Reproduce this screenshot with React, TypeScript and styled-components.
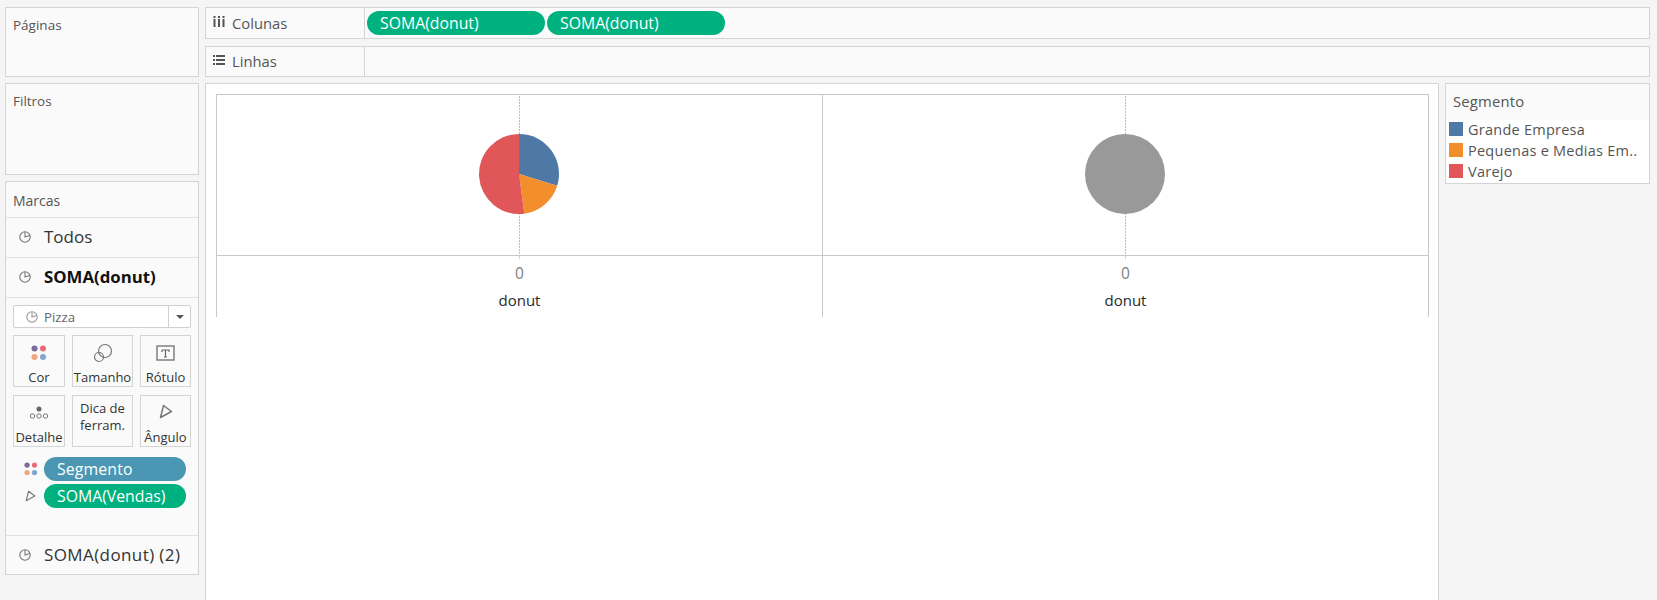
import React from "react";
import styled, { createGlobalStyle } from "styled-components";

const Global = createGlobalStyle`
  html, body { margin: 0; padding: 0; background: #f5f5f5; }
  body { font-family: "Open Sans", "Liberation Sans", sans-serif; overflow: hidden; }
  * { box-sizing: border-box; }
`;

const Page = styled.div`
  width: 1657px; height: 600px; overflow: hidden;
  display: grid; grid-template-columns: 194px 1fr; grid-template-rows: 70px 1fr;
  gap: 6px; padding: 7px 7px 0 5px; background: #f5f5f5;
`;
const Panel = styled.div<{ $h?: number }>`
  background: #fafafa; border: 1px solid #d4d4d4;
  ${(p) => (p.$h ? `height: ${p.$h}px;` : "")}
`;
const PanelTitle = styled.div`
  font-size: 13.5px; color: #555; padding: 8px 7px; line-height: 19px;
`;
const Shelves = styled.div`display: flex; flex-direction: column; gap: 7px;`;
const Shelf = styled(Panel)`flex: 1; display: flex; align-items: stretch;`;
const ShelfLabel = styled.div`
  width: 159px; flex: none; border-right: 1px solid #d4d4d4; display: flex; align-items: center;
  gap: 7px; padding: 0 0 0 7px; font-size: 14.8px; color: #555;
`;
const ShelfIcon = styled.svg`flex: none; margin-top: -3px;`;
const ShelfPills = styled.div`flex: 1; display: flex; align-items: center; gap: 2px; padding-left: 2px;`;
const Pill = styled.div<{ $w: number; $blue?: boolean }>`
  width: ${(p) => p.$w}px; height: 24px; border-radius: 12px; flex: none;
  background: ${(p) => (p.$blue ? "#4b96b3" : "#00b180")};
  color: #fff; font-size: 15.8px; line-height: 24px; padding-left: 13px; white-space: nowrap;
  letter-spacing: ${(p) => (p.$blue ? "0.15px" : "0")};
`;
const LeftCol = styled.div`display: flex; flex-direction: column; gap: 6px;`;
const Main = styled.div`display: flex; gap: 6px; min-height: 0;`;
const View = styled.div`
  width: 1234px; height: 530px; flex: none; background: #fff; padding: 10px 10px 0;
  border: 1px solid #d4d4d4; border-bottom: none;
`;
const Plot = styled.div`
  display: grid; grid-template-columns: 605px 1fr; grid-template-rows: 160px 62px;
  width: 1213px; border: 1px solid #c8c8c8; border-bottom: none;
`;
const Pane = styled.div<{ $second?: boolean }>`
  display: flex; justify-content: center; align-items: flex-start;
  ${(p) => (p.$second ? "border-left: 1px solid #c8c8c8;" : "")}
`;
const AxisPane = styled(Pane)`
  flex-direction: column; align-items: center; justify-content: flex-start;
  border-top: 1px solid #c8c8c8;
`;
const Tick = styled.div`font-size: 15.5px; color: #808080; line-height: 18px; margin-top: 8px;`;
const AxisTitle = styled.div`font-size: 15px; font-weight: 400; color: #2a2a2a; line-height: 18px; margin-top: 9px;`;
const Legend = styled.div`
  width: 205px; height: 101px; flex: none; background: #fff; border: 1px solid #d4d4d4;
  display: flex; flex-direction: column;
`;
const LegendTitle = styled.div`
  height: 36px; background: #fafafa; font-size: 14.8px; letter-spacing: 0.2px; color: #555; padding: 6px 7px 0; line-height: 22px; flex: none;
`;
const LegendRows = styled.div`display: flex; flex-direction: column; gap: 7px; padding: 2px 3px 0;`;
const LegendRow = styled.div`
  display: flex; align-items: center; gap: 5px; height: 14px; font-size: 14.5px; color: #555; white-space: nowrap; letter-spacing: 0.25px;
`;
const Swatch = styled.div<{ $c: string }>`width: 14px; height: 14px; background: ${(p) => p.$c}; flex: none;`;
const MarkRow = styled.div<{ $bold?: boolean; $wide?: boolean }>`
  height: 40px; display: flex; align-items: center; padding: 0 0 2px 13px; gap: 13px;
  border-top: 1px solid #e0e0e0; font-size: ${(p) => (p.$bold ? 16.8 : 17)}px; color: ${(p) => (p.$bold ? "#111" : "#333")};
  font-weight: ${(p) => (p.$bold ? 700 : 400)};
  letter-spacing: ${(p) => (p.$wide ? "0.4px" : "0")};
`;
const MarkTitle = styled(PanelTitle)`height: 35px; padding-top: 9px; font-size: 14px;`;
const Editor = styled.div`padding: 7px 7px 0; height: 238px; border-top: 1px solid #e0e0e0;`;
const Dropdown = styled.div`
  height: 23px; border: 1px solid #d0d0d0; border-radius: 2px; background: #fff;
  display: flex; align-items: center; font-size: 13.2px; color: #666; padding-left: 12px; gap: 6px;
`;
const DropLabel = styled.span`flex: 1;`;
const Caret = styled.div`
  width: 22px; height: 21px; border-left: 1px solid #d0d0d0; display: flex; align-items: center; justify-content: center;
  &::after { content: ""; border: 4px solid transparent; border-top: 4px solid #555; border-bottom: none; }
`;
const Cards = styled.div`
  display: grid; grid-template-columns: 52px 61px 51px; grid-auto-rows: 52px; gap: 8px 7px; margin-top: 7px;
`;
const Card = styled.div`
  border: 1px solid #d4d4d4; background: #fafafa; display: flex; flex-direction: column; align-items: center;
  font-size: 13px; color: #333; line-height: 17px; white-space: nowrap; justify-content: flex-end;
`;
const CardIcon = styled.div`flex: 1; display: flex; align-items: center; justify-content: center;`;
const AngleCardIcon = styled(CardIcon)`padding-bottom: 3px;`;
const TextCard = styled(Card)`justify-content: center; padding-bottom: 8px;`;
const PillRow = styled.div`display: flex; align-items: center; height: 24px; margin-top: 3px;`;
const PillFirstRow = styled(PillRow)`margin-top: 0;`;
const PillIcon = styled.div`width: 31px; flex: none; display: flex; justify-content: center; padding-left: 4px;`;
const Pills = styled.div`margin-top: 10px;`;

const PieIcon = ({ c = "#777" }: { c?: string }) => (
  <svg width="12" height="12" viewBox="0 0 12 12" fill="none" stroke={c} strokeWidth="1.1">
    <circle cx="6" cy="6" r="5.2" />
    <path d="M6 1V6L10.6 4.4" />
  </svg>
);
const ColorIcon = ({ s = 16 }: { s?: number }) => (
  <svg width={s} height={s} viewBox="0 0 16 16">
    <circle cx="3.5" cy="3.5" r="3" fill="#7b6a9c" />
    <circle cx="12" cy="3.5" r="3" fill="#ea6b7c" />
    <circle cx="3.5" cy="12" r="3" fill="#f0a77e" />
    <circle cx="12" cy="12" r="3" fill="#7fa6cf" />
  </svg>
);
const AngleIcon = ({ s = 14 }: { s?: number }) => (
  <svg width={s} height={s + 1} viewBox="0 0 14 15" fill="none" stroke="#777" strokeWidth="1.5" strokeLinejoin="round">
    <path d="M4.5 1.5L12.5 7.5L1.5 13.5Z" />
  </svg>
);
const pt = (deg: number, r = 40) => {
  const a = (deg * Math.PI) / 180;
  return `${39 + r * Math.sin(a)} ${79 - r * Math.cos(a)}`;
};
const slice = (a: number, b: number) =>
  `M39 79L${pt(a)}A40 40 0 ${b - a > 180 ? 1 : 0} 1 ${pt(b)}Z`;

const DashLine = () => (
  <line x1="39.5" y1="1" x2="39.5" y2="164" stroke="#bdbdbd" strokeDasharray="2 1" />
);
const Chart = styled.svg`overflow: visible; display: block;`;

export default function App() {
  return (
    <>
      <Global />
      <Page>
        <Panel><PanelTitle>Páginas</PanelTitle></Panel>
        <Shelves>
          <Shelf>
            <ShelfLabel>
              <ShelfIcon width="12" height="13" viewBox="0 0 12 13" fill="#555">
                <rect x="0.5" y="4" width="2" height="8" /><rect x="5" y="4" width="2" height="8" /><rect x="9.5" y="4" width="2" height="8" />
                <rect x="0.5" y="1" width="2" height="2" /><rect x="5" y="1" width="2" height="2" /><rect x="9.5" y="1" width="2" height="2" />
              </ShelfIcon>
              Colunas
            </ShelfLabel>
            <ShelfPills>
              <Pill $w={178}>SOMA(donut)</Pill>
              <Pill $w={178}>SOMA(donut)</Pill>
            </ShelfPills>
          </Shelf>
          <Shelf>
            <ShelfLabel>
              <ShelfIcon width="12" height="13" viewBox="0 0 12 13" fill="#555">
                <rect x="0" y="2" width="2" height="2" /><rect x="3" y="2" width="9" height="2" />
                <rect x="0" y="6" width="2" height="2" /><rect x="3" y="6" width="9" height="2" />
                <rect x="0" y="10" width="2" height="2" /><rect x="3" y="10" width="9" height="2" />
              </ShelfIcon>
              Linhas
            </ShelfLabel>
            <ShelfPills />
          </Shelf>
        </Shelves>
        <LeftCol>
          <Panel $h={92}><PanelTitle>Filtros</PanelTitle></Panel>
          <Panel $h={394}>
            <MarkTitle>Marcas</MarkTitle>
            <MarkRow><PieIcon />Todos</MarkRow>
            <MarkRow $bold><PieIcon />SOMA(donut)</MarkRow>
            <Editor>
              <Dropdown>
                <PieIcon c="#999" />
                <DropLabel>Pizza</DropLabel>
                <Caret />
              </Dropdown>
              <Cards>
                <Card><CardIcon><ColorIcon /></CardIcon>Cor</Card>
                <Card>
                  <CardIcon>
                    <svg width="20" height="20" viewBox="0 0 20 20" fill="none" stroke="#777" strokeWidth="1.2">
                      <circle cx="12" cy="8" r="6.5" /><circle cx="6" cy="14" r="4.5" />
                    </svg>
                  </CardIcon>
                  Tamanho
                </Card>
                <Card>
                  <CardIcon>
                    <svg width="20" height="18" viewBox="0 0 20 18" fill="none">
                      <rect x="1" y="2" width="17" height="14" stroke="#777" strokeWidth="1.4" />
                      <path d="M6 6h7v2M9.5 6v7M8 13h3M6 6v2" stroke="#666" strokeWidth="1.2" />
                    </svg>
                  </CardIcon>
                  Rótulo
                </Card>
                <Card>
                  <CardIcon>
                    <svg width="20" height="16" viewBox="0 0 20 16" fill="none" stroke="#777">
                      <circle cx="10" cy="4" r="2.5" fill="#666" stroke="none" />
                      <circle cx="3.5" cy="11" r="2.2" /><circle cx="10" cy="11" r="2.2" /><circle cx="16.5" cy="11" r="2.2" />
                    </svg>
                  </CardIcon>
                  Detalhe
                </Card>
                <TextCard>Dica de<br />ferram.</TextCard>
                <Card><AngleCardIcon><AngleIcon /></AngleCardIcon>Ângulo</Card>
              </Cards>
              <Pills>
                <PillFirstRow>
                  <PillIcon><ColorIcon s={14} /></PillIcon>
                  <Pill $w={142} $blue>Segmento</Pill>
                </PillFirstRow>
                <PillRow>
                  <PillIcon><AngleIcon s={11} /></PillIcon>
                  <Pill $w={142}>SOMA(Vendas)</Pill>
                </PillRow>
              </Pills>
            </Editor>
            <MarkRow $wide><PieIcon />SOMA(donut) (2)</MarkRow>
          </Panel>
        </LeftCol>
        <Main>
          <View>
            <Plot>
              <Pane>
                <Chart width="80" height="160">
                  <DashLine />
                  <path d={slice(0, 107.2)} fill="#4e79a7" />
                  <path d={slice(107.2, 172.3)} fill="#f28e2b" />
                  <path d={slice(172.3, 360)} fill="#e15759" />
                </Chart>
              </Pane>
              <Pane $second>
                <Chart width="80" height="160">
                  <DashLine />
                  <circle cx="39" cy="79" r="40" fill="#999" />
                </Chart>
              </Pane>
              <AxisPane><Tick>0</Tick><AxisTitle>donut</AxisTitle></AxisPane>
              <AxisPane $second><Tick>0</Tick><AxisTitle>donut</AxisTitle></AxisPane>
            </Plot>
          </View>
          <Legend>
            <LegendTitle>Segmento</LegendTitle>
            <LegendRows>
              <LegendRow><Swatch $c="#4e79a7" />Grande Empresa</LegendRow>
              <LegendRow><Swatch $c="#f28e2b" />Pequenas e Medias Em..</LegendRow>
              <LegendRow><Swatch $c="#e15759" />Varejo</LegendRow>
            </LegendRows>
          </Legend>
        </Main>
      </Page>
    </>
  );
}
